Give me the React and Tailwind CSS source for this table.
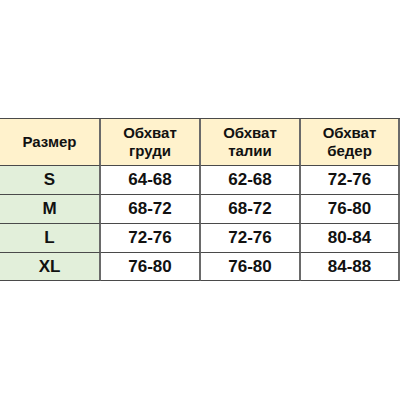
const headers = ["Размер", "Обхват\nгруди", "Обхват\nталии", "Обхват\nбедер"];

const rows = [
  ["S", "64-68", "62-68", "72-76"],
  ["M", "68-72", "68-72", "76-80"],
  ["L", "72-76", "72-76", "80-84"],
  ["XL", "76-80", "76-80", "84-88"],
];

export default function App() {
  return (
    <div className="h-[400px] w-[400px] bg-white pt-[118px] font-['Liberation_Sans',Arial,sans-serif] text-[#111]">
      <div className="grid grid-cols-[101px_100px_100px_99px] grid-rows-[47px_29px_29px_29px_28px] border-t border-[#4a4a4a]">
        {headers.map((h) => (
          <div
            key={h}
            className="flex items-center justify-center whitespace-pre-line border-b border-r-2 border-b-[#4a4a4a] border-r-[#6a6a6a] bg-[#fff2cc] text-center text-[15px] font-bold leading-[18px]"
          >
            {h}
          </div>
        ))}
        {rows.map((row) =>
          row.map((cell, i) => (
            <div
              key={row[0] + i}
              className={`flex items-center justify-center border-b border-r-2 border-b-[#4a4a4a] border-r-[#6a6a6a] text-[17px] font-bold ${
                i === 0 ? "bg-[#e2efda]" : "bg-white"
              }`}
            >
              {cell}
            </div>
          ))
        )}
      </div>
    </div>
  );
}
